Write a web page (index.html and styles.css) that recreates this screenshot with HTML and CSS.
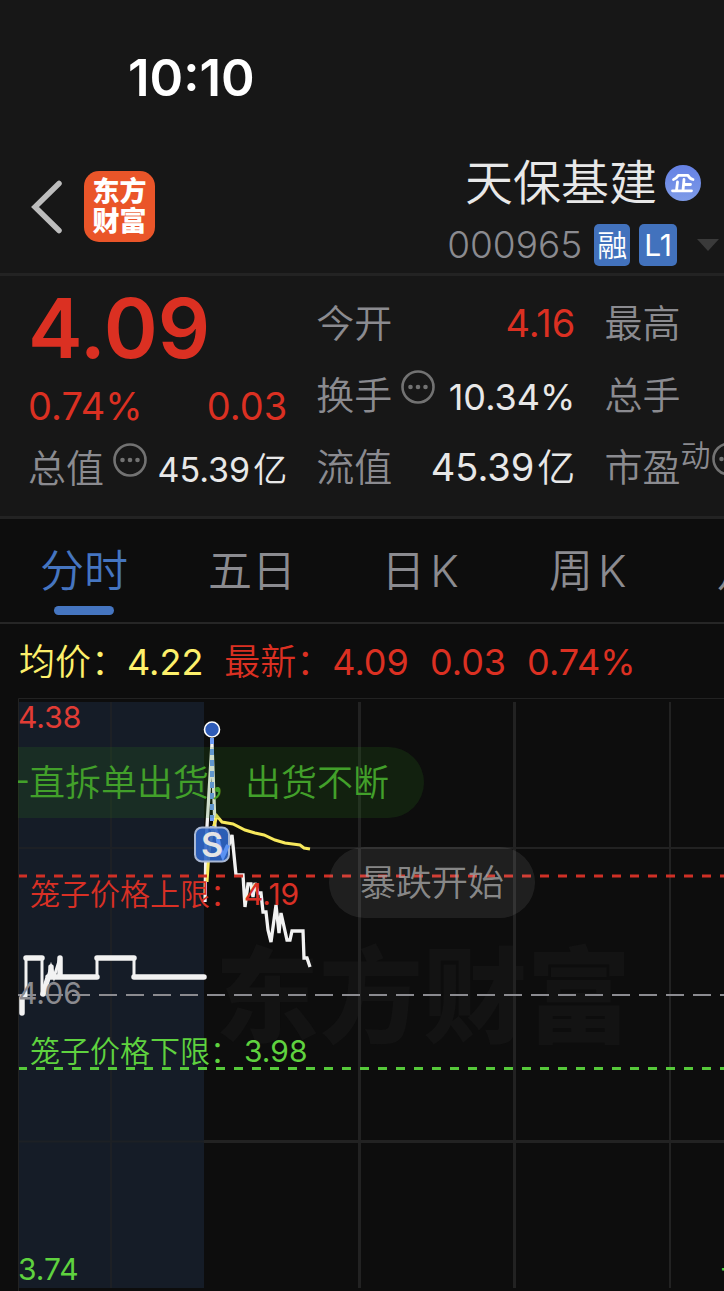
FILE: index.html
```html
<!DOCTYPE html>
<html lang="zh-CN">
<head>
<meta charset="utf-8">
<meta name="viewport" content="width=device-width, initial-scale=1">
<title>天保基建 000965</title>
<link rel="stylesheet" href="styles.css">
</head>
<body>
<svg class="defs" aria-hidden="true">
  <symbol id="more" viewBox="0 0 34 34">
    <circle cx="17" cy="17" r="15.5" fill="none" stroke="currentColor" stroke-width="2.6"/>
    <circle cx="9.5" cy="17" r="2.3" fill="currentColor"/>
    <circle cx="17" cy="17" r="2.3" fill="currentColor"/>
    <circle cx="24.5" cy="17" r="2.3" fill="currentColor"/>
  </symbol>
</svg>
<div class="status"><time>10:10</time></div>
<header class="header">
  <button class="back" aria-label="返回">
    <svg width="34" height="56" viewBox="0 0 34 56"><path d="M29 4.500L5 28L29 51.500" fill="none" stroke="#bdbdbd" stroke-width="5.500" stroke-linecap="round" stroke-linejoin="miter"/></svg>
  </button>
  <a class="logo" href="#"><span>东方</span><span>财富</span></a>
  <div class="stock">
    <h1 class="name">天保基建
      <svg width="36" height="36" viewBox="0 0 36 36" role="img" aria-label="企">
        <defs><linearGradient id="badge" x1="0" y1="0" x2="0" y2="1"><stop offset="0" stop-color="#6581e4"/><stop offset="1" stop-color="#7e9be8"/></linearGradient></defs>
        <circle cx="18" cy="18" r="18" fill="url(#badge)"/>
        <path d="M8.500 14.500Q11.500 13.500 13.500 10.300H23Q24.500 13.500 28 14.500M19 14.500L18 25.500M19 19.500H25.500M12.500 17L11.500 25.500M7.500 25.800H26.500" fill="none" stroke="#fff" stroke-width="2.800" stroke-linecap="round" stroke-linejoin="round"/>
      </svg>
    </h1>
    <div class="code">
      <span>000965</span>
      <b class="tag">融</b>
      <b class="tag level">L1</b>
      <svg class="caret" width="22" height="12" viewBox="0 0 22 12"><path d="M0 0H22L11 12Z" fill="#3a3a3a"/></svg>
    </div>
  </div>
</header>
<section class="quote">
  <div class="col">
    <strong class="price">4.09</strong>
    <div class="change"><span>0.74%</span><span>0.03</span></div>
    <div class="item total"><span class="label">总值<svg class="more"><use href="#more"/></svg></span><span class="value small">45.39<i>亿</i></span></div>
  </div>
  <div class="col">
    <div class="item"><span class="label">今开</span><span class="value up">4.16</span></div>
    <div class="item"><span class="label">换手<svg class="more"><use href="#more"/></svg></span><span class="value medium">10.34%</span></div>
    <div class="item"><span class="label">流值</span><span class="value">45.39<i>亿</i></span></div>
  </div>
  <div class="col">
    <div class="item"><span class="label">最高</span></div>
    <div class="item"><span class="label">总手</span></div>
    <div class="item"><span class="label">市盈<sup>动</sup><svg class="more near"><use href="#more"/></svg></span></div>
  </div>
</section>
<nav class="tabs">
  <button class="tab active">分时</button>
  <button class="tab">五日</button>
  <button class="tab">日<span>K</span></button>
  <button class="tab">周<span>K</span></button>
  <button class="tab">月<span>K</span></button>
</nav>
<div class="legend">
  <span class="avg"><i>均价：</i>4.22</span>
  <span><i>最新：</i>4.09</span>
  <span>0.03</span>
  <span>0.74%</span>
</div>
<main class="chart">
  <svg class="plot" role="img" aria-label="分时走势图">
    <g transform="translate(-18 -698)">
      <rect x="19" y="702" width="185" height="586" fill="#151c27"/>
      <text class="watermark" x="215" y="1035">东方财富</text>
      <g stroke="#222" fill="none">
        <path d="M18.500 1291V698.500H3000" stroke-width="1"/>
        <path d="M111 702V1288" stroke-width="2" stroke="#1d2025"/>
        <path d="M359.500 702V1288M514.500 702V1288" stroke-width="3"/>
        <path d="M670 702V1288M204 848H3000" stroke-width="2"/>
        <path d="M204 1141.500H3000" stroke-width="3"/>
        <path d="M19 848H204M19 1141.500H204" stroke-width="2" stroke="#1d2025"/>
      </g>
      <path d="M18 995H3000" stroke="#8b8b90" stroke-width="2" stroke-dasharray="18 9"/>
      <g fill="none" stroke="#f2f2f2">
        <path d="M22 1015V996H26V958H42V995L48 977L51 967L54 977L60 958V977H97V958H134V977H205" stroke-width="3"/>
        <path d="M22 1013V998M26 958H42M43 994L48 978M51 967V977M60 958V977M48 977H97M97 958H134M134 977H204" stroke-width="5.500" stroke-linecap="round"/>
        <path d="M205 902L206 843L212 743L215 827L219 842L223 857L229 845L232 835L236 875H243L245 907L248 884H251L253 897L255 883L258 893H261L263 912H266L268 930L271 942L276 905L279 933L281 913L287 940H290L292 931H303L304 958H307L310 967" stroke-width="3.300"/>
      </g>
      <path d="M207 882L209 852L213 828L217 816L222 822L233 824L245 830L255 833L264 835L275 840L285 843L300 845L304 848L310 849" fill="none" stroke="#f7e85c" stroke-width="3"/>
      <path d="M212 738V830" stroke="#6d9cf5" stroke-width="4" stroke-dasharray="6 5"/>
      <path d="M19 876H3000" stroke="#cf3026" stroke-width="3" stroke-dasharray="9 9" stroke-dashoffset="1"/>
      <path d="M19 1068.500H3000" stroke="#56c93a" stroke-width="3" stroke-dasharray="9 9" stroke-dashoffset="1"/>
      <rect x="195" y="827.500" width="34" height="34" rx="7" fill="#2f66c8" fill-opacity=".9" stroke="#a9b8d4" stroke-width="2"/>
      <path d="M217 833L219 847L223 856L228 845" stroke="#5b92f3" stroke-width="4" fill="none"/>
      <text class="sell" x="212" y="857" text-anchor="middle">S</text>
      <circle cx="212" cy="729.500" r="7.500" fill="#2f5cb8" stroke="#fff" stroke-width="1.600"/>
      <g class="marks">
        <text x="18" y="728" fill="#e23c35">4.38</text>
        <text x="18" y="1004" fill="#8b8b90">4.06</text>
        <text x="18" y="1280" fill="#5fd23f">3.74</text>
        <text x="720" y="1280" fill="#5fd23f">-7.88%</text>
        <text class="cage" x="30" y="905" fill="#d93025">笼子价格上限：</text><text x="244" y="905" fill="#d93025">4.19</text>
        <text class="cage" x="30" y="1062" fill="#5fd23f">笼子价格下限：</text><text x="244" y="1062" fill="#5fd23f">3.98</text>
      </g>
    </g>
  </svg>
  <div class="bullet sellout">一直拆单出货，出货不断</div>
  <div class="bullet plunge">暴跌开始</div>
</main>
</body>
</html>
```

FILE: styles.css
```css
* { box-sizing: border-box; }
body {
  margin: 0;
  overflow-x: hidden;
  background: #0d0d0d;
  color: #e8e8e8;
  font-family: Inter, "Noto Sans CJK SC", sans-serif;
  font-weight: 350;
}
button { border: 0; padding: 0; background: none; font: inherit; color: inherit; }
i { font-style: normal; font-weight: 350; }
.defs { position: absolute; width: 0; height: 0; }

.status { height: 140px; padding: 48px 128px 0; background: #171717; }
.status time { display: block; color: #fff; font-size: 51px; line-height: 60px; font-weight: 600; }

.header {
  display: flex;
  align-items: center;
  height: 136px;
  padding: 0 5px 0 30px;
  background: #171717;
  border-bottom: 3px solid #232323;
}
.back { display: flex; width: 54px; }
.logo {
  display: flex;
  flex-direction: column;
  justify-content: center;
  width: 71px;
  height: 71px;
  border-radius: 15px;
  background: #ea5529;
  color: #fff;
  font-size: 27px;
  line-height: 30px;
  font-weight: 900;
  text-align: center;
  text-decoration: none;
}
.stock { display: flex; flex-direction: column; align-items: center; margin-left: auto; padding-top: 4px; }
.name {
  display: flex;
  align-items: center;
  gap: 8px;
  margin: 0;
  font-size: 48px;
  line-height: 72px;
  font-weight: 350;
}
.code { display: flex; align-items: center; height: 52px; color: #8b8b90; font-size: 37px; }
.tag {
  margin-left: 9px;
  padding: 0 3px;
  border-radius: 5px;
  background: #4272bd;
  color: #fff;
  font-size: 30px;
  line-height: 42px;
  font-weight: 350;
}
.tag:first-of-type { margin-left: 12px; }
.level { padding: 0 5px; font-weight: 400; }
.caret { margin-left: 20px; }

.quote {
  display: grid;
  grid-template-columns: repeat(3, calc(40% - 8px));
  column-gap: 29px;
  height: 243px;
  padding: 11px 28px 0;
  overflow: hidden;
  background: #171717;
  border-bottom: 3px solid #232323;
}
.col { display: flex; flex-direction: column; white-space: nowrap; }
.price { height: 84px; color: #db3022; font-size: 82px; line-height: 84px; font-weight: 600; }
.change {
  display: flex;
  justify-content: space-between;
  color: #db3022;
  font-size: 38px;
  line-height: 70px;
  font-weight: 400;
}
.item { display: flex; align-items: center; justify-content: space-between; height: 72px; }
.total { height: 54px; }
.label { display: flex; align-items: center; color: #8b8b90; font-size: 38px; line-height: 54px; }
.label sup { align-self: flex-start; font-size: 30px; line-height: 30px; }
.more { width: 34px; height: 34px; margin: 0 0 16px 9px; color: #727272; }
.near { flex: none; margin-left: 2px; }
.value { display: flex; align-items: baseline; gap: 3px; font-size: 38px; line-height: 54px; font-weight: 400; }
.medium { font-size: 36px; padding-top: 4px; }
.small { font-size: 34px; padding-top: 4px; }
.up { color: #db3022; }

.tabs { display: flex; height: 105px; overflow: hidden; border-bottom: 2px solid #262626; }
.tab {
  position: relative;
  display: flex;
  flex: 0 0 23.2%;
  justify-content: center;
  gap: 5px;
  color: #8b8b90;
  font-size: 44px;
  line-height: 105px;
}
.active { color: #4575c0; }
.active::after {
  content: "";
  position: absolute;
  bottom: 7px;
  left: calc(50% - 30px);
  width: 60px;
  height: 9px;
  border-radius: 5px;
  background: #4575c0;
}

.legend {
  display: flex;
  gap: 21px;
  height: 74px;
  padding: 0 19px;
  color: #db3022;
  font-size: 36px;
  line-height: 76px;
  font-weight: 400;
  white-space: nowrap;
}
.avg { color: #fdf06b; }

.chart { position: relative; margin-left: 18px; height: 593px; overflow: hidden; }
.plot { display: block; width: 100%; height: 100%; }
.watermark { fill: #131313; font-size: 104px; font-weight: 900; }
.sell { fill: #e4e4e4; font-size: 34px; font-weight: 600; }
.marks { font-size: 30px; font-weight: 400; }
.cage { font-weight: 350; }
.bullet {
  position: absolute;
  height: 71px;
  padding: 0 31px;
  border-radius: 36px;
  font-size: 36px;
  line-height: 73px;
  white-space: nowrap;
}
.sellout { top: 49px; left: -56px; padding-right: 35px; color: #42a02a; background: rgba(45, 130, 30, .18); }
.plunge { top: 149px; left: 311px; color: rgba(165, 165, 165, .8); background: rgba(255, 255, 255, .08); }
```
